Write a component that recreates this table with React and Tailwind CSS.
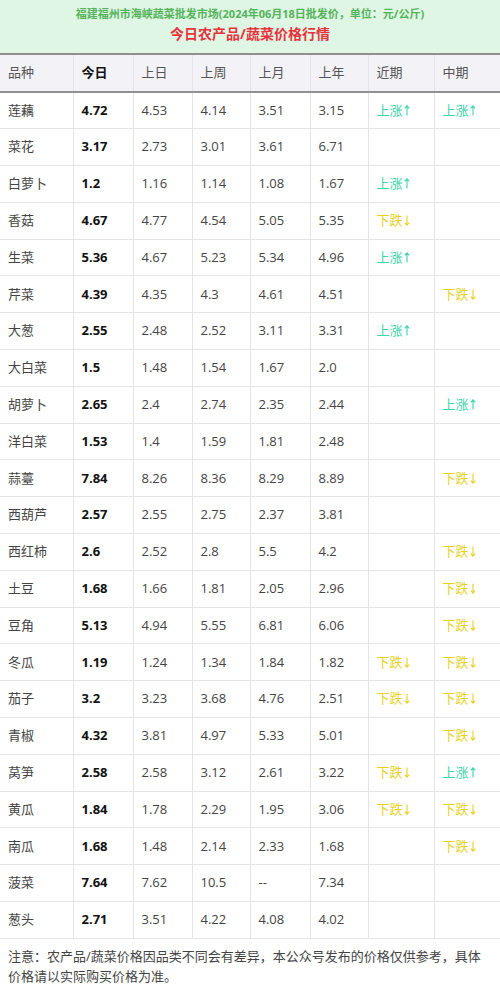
import React from "react";

const rows = [
  ["莲藕", "4.72", "4.53", "4.14", "3.51", "3.15", "u", "u"],
  ["菜花", "3.17", "2.73", "3.01", "3.61", "6.71", "", ""],
  ["白萝卜", "1.2", "1.16", "1.14", "1.08", "1.67", "u", ""],
  ["香菇", "4.67", "4.77", "4.54", "5.05", "5.35", "d", ""],
  ["生菜", "5.36", "4.67", "5.23", "5.34", "4.96", "u", ""],
  ["芹菜", "4.39", "4.35", "4.3", "4.61", "4.51", "", "d"],
  ["大葱", "2.55", "2.48", "2.52", "3.11", "3.31", "u", ""],
  ["大白菜", "1.5", "1.48", "1.54", "1.67", "2.0", "", ""],
  ["胡萝卜", "2.65", "2.4", "2.74", "2.35", "2.44", "", "u"],
  ["洋白菜", "1.53", "1.4", "1.59", "1.81", "2.48", "", ""],
  ["蒜薹", "7.84", "8.26", "8.36", "8.29", "8.89", "", "d"],
  ["西葫芦", "2.57", "2.55", "2.75", "2.37", "3.81", "", ""],
  ["西红柿", "2.6", "2.52", "2.8", "5.5", "4.2", "", "d"],
  ["土豆", "1.68", "1.66", "1.81", "2.05", "2.96", "", "d"],
  ["豆角", "5.13", "4.94", "5.55", "6.81", "6.06", "", "d"],
  ["冬瓜", "1.19", "1.24", "1.34", "1.84", "1.82", "d", "d"],
  ["茄子", "3.2", "3.23", "3.68", "4.76", "2.51", "d", "d"],
  ["青椒", "4.32", "3.81", "4.97", "5.33", "5.01", "", "d"],
  ["莴笋", "2.58", "2.58", "3.12", "2.61", "3.22", "d", "u"],
  ["黄瓜", "1.84", "1.78", "2.29", "1.95", "3.06", "d", "d"],
  ["南瓜", "1.68", "1.48", "2.14", "2.33", "1.68", "", "d"],
  ["菠菜", "7.64", "7.62", "10.5", "--", "7.34", "", ""],
  ["葱头", "2.71", "3.51", "4.22", "4.08", "4.02", "", ""],
];

const widths = ["w-[73px]", "w-[60px]", "w-[59px]", "w-[58px]", "w-[60px]", "w-[58px]", "w-[66px]", "w-[66px]"];
const heads = ["品种", "今日", "上日", "上周", "上月", "上年", "近期", "中期"];

function Arrow({ down }) {
  return (
    <svg width="6" height="11" viewBox="0 0 6 11" className="inline-block ml-[1px] align-[-1px]">
      {down ? (
        <path d="M3 0.5V10M0.8 7.6L3 10.2L5.2 7.6" stroke="currentColor" strokeWidth="1.1" fill="none" />
      ) : (
        <path d="M3 10.5V1M0.8 3.4L3 0.8L5.2 3.4" stroke="currentColor" strokeWidth="1.1" fill="none" />
      )}
    </svg>
  );
}

function Trend({ t }) {
  if (t === "u")
    return (
      <span className="text-[#3dd4aa] whitespace-nowrap">
        上涨
        <Arrow />
      </span>
    );
  if (t === "d")
    return (
      <span className="text-[#e8d21f] whitespace-nowrap">
        下跌
        <Arrow down />
      </span>
    );
  return null;
}

export default function App() {
  return (
    <div
      className="w-[500px] h-[986px] bg-white text-[#333] overflow-hidden"
      style={{ fontFamily: '"Open Sans", "Noto Sans CJK SC", sans-serif' }}
    >
      <div className="h-[55px] bg-[#def6e3] flex flex-col items-center pt-[5px] border-b-2 border-[#8f8f8f]">
        <div className="text-[11px] leading-[18px] font-bold text-[#55b35b]">
          福建福州市海峡蔬菜批发市场(2024年06月18日批发价，单位：元/公斤)
        </div>
        <div className="text-[14px] leading-[22px] font-bold text-[#e5343e]">今日农产品/蔬菜价格行情</div>
      </div>
      <table className="table-fixed border-collapse w-[500px] text-[13px]">
        <thead>
          <tr className="h-[37px] bg-[#f3f2f6] border-b-2 border-[#8f8f8f]">
            {heads.map((h, i) => (
              <th
                key={h}
                className={`${widths[i]} text-left pl-[8px] border-x border-[#e4e4e8] first:border-l-0 last:border-r-0 ${
                  i === 1 ? "font-bold text-[#111]" : "font-normal text-[#555]"
                }`}
              >
                {h}
              </th>
            ))}
          </tr>
        </thead>
        <tbody>
          {rows.map((r) => (
            <tr key={r[0]} className="h-[36.8px] border-b border-[#e4e4e8]">
              {r.map((c, i) => (
                <td
                  key={i}
                  className={`pl-[8px] border-x border-[#e4e4e8] first:border-l-0 last:border-r-0 ${
                    i === 1 ? "font-bold text-[#111]" : "text-[#444]"
                  }`}
                >
                  {i >= 6 ? <Trend t={c} /> : c}
                </td>
              ))}
            </tr>
          ))}
        </tbody>
      </table>
      <div className="px-[8px] pt-[7px] text-[13px] leading-[20px] text-[#444]">
        注意：农产品/蔬菜价格因品类不同会有差异，本公众号发布的价格仅供参考，具体价格请以实际购买价格为准。
      </div>
    </div>
  );
}
